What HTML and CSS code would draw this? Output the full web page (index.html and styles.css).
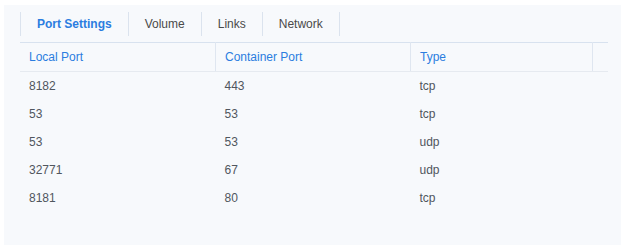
FILE: index.html
```html
<!DOCTYPE html>
<html lang="en">
<head>
    <meta charset="UTF-8">
    <title>Port Settings</title>
    <link rel="stylesheet" href="styles.css">
</head>
<body>
    <div class="panel">
        <div class="tabs">
            <div class="tab active">Port Settings</div>
            <div class="tab">Volume</div>
            <div class="tab">Links</div>
            <div class="tab">Network</div>
        </div>
        <table class="ports">
            <thead>
                <tr>
                    <th class="col-local">Local Port</th>
                    <th class="col-container">Container Port</th>
                    <th class="col-type">Type</th>
                    <th class="col-extra"></th>
                </tr>
            </thead>
            <tbody>
                <tr><td>8182</td><td>443</td><td>tcp</td><td></td></tr>
                <tr><td>53</td><td>53</td><td>tcp</td><td></td></tr>
                <tr><td>53</td><td>53</td><td>udp</td><td></td></tr>
                <tr><td>32771</td><td>67</td><td>udp</td><td></td></tr>
                <tr><td>8181</td><td>80</td><td>tcp</td><td></td></tr>
            </tbody>
        </table>
    </div>
</body>
</html>
```

FILE: styles.css
```css
body {
    margin: 0;
    padding: 5px 0 0 4px;
    background: #fff;
    font-family: "Liberation Sans", Arial, sans-serif;
    font-size: 12px;
}

.panel {
    background: #f7f9fc;
    height: 240px;
    padding: 7px 13px 0 16px;
    box-sizing: border-box;
}

/* tabs */
.tabs {
    display: flex;
    height: 24px;
}

.tab {
    display: flex;
    align-items: center;
    padding: 0 16px;
    color: #4a4a4a;
    border-right: 1px solid #dbe3ee;
}

.tab:first-child {
    border-left: 1px solid #dbe3ee;
}

.tab.active {
    color: #2b7de0;
    font-weight: bold;
}

/* table */
.ports {
    margin-top: 6px;
    width: 588px;
    border-collapse: collapse;
    border-top: 1px solid #d8e2ef;
}

.ports th {
    text-align: left;
    font-weight: normal;
    color: #2b7de0;
    height: 28px;
    padding: 0 0 0 9px;
    border-right: 1px solid #dfe6f0;
    border-bottom: 1px solid #e6eaf0;
}

.ports th.col-extra {
    border-right: none;
}

.col-local { width: 186px; }
.col-container { width: 185px; }
.col-type { width: 172px; }

.ports td {
    height: 28px;
    padding: 0 0 0 9px;
    color: #50565e;
}
```
